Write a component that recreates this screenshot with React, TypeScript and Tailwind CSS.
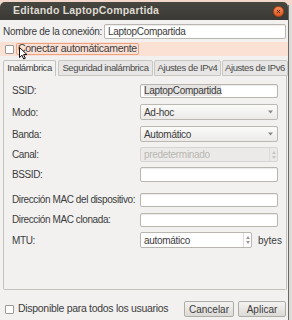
import React from "react";

const font = { fontFamily: '"Liberation Sans", Arial, sans-serif' };

const TextInput = ({
  value,
  selected = false,
  width = "w-[138px]",
  h = "h-[14px]",
}: {
  value?: string;
  selected?: boolean;
  width?: string;
  h?: string;
}) => (
  <div
    className={`${width} ${h} shrink-0 bg-white border border-[#b9b6b0] rounded-[2px] flex items-center px-[3px] text-[10px] tracking-[-0.3px] text-[#3c3c3c] whitespace-nowrap shadow-[inset_0_1px_1px_rgba(0,0,0,0.08)]`}
  >
    {value && <span className={`leading-[11px] ${selected ? "bg-[#e6e5e3]" : ""}`}>{value}</span>}
  </div>
);

const Combo = ({ value }: { value: string }) => (
  <div className="w-[138px] h-[16px] rounded-[2px] border border-[#bcb9b3] bg-gradient-to-b from-[#fbfbfa] to-[#ebeae8] flex items-center justify-between pl-[3px] pr-[4px] text-[10px] tracking-[-0.3px] text-[#3c3c3c] whitespace-nowrap">
    <span>{value}</span>
    <svg width="5" height="4" viewBox="0 0 5 4">
      <path d="M0 0.5h5L2.5 3.5z" fill="#8a8884" />
    </svg>
  </div>
);

const SpinArrows = ({ color }: { color: string }) => (
  <div className="flex flex-col items-center justify-center gap-[2px] w-[8px] h-full border-l border-[#dedcd8]">
    <svg width="4" height="3" viewBox="0 0 4 3">
      <path d="M0 3h4L2 0z" fill={color} />
    </svg>
    <svg width="4" height="3" viewBox="0 0 4 3">
      <path d="M0 0h4L2 3z" fill={color} />
    </svg>
  </div>
);

const Row = ({ label, children, top }: { label: string; children: React.ReactNode; top: string }) => (
  <div className={`flex items-center ${top}`}>
    <span className="w-[128px] shrink-0 text-[10px] tracking-[-0.4px] text-[#3c3c3c] whitespace-nowrap">{label}</span>
    {children}
  </div>
);

const Checkbox = () => (
  <div className="w-[9px] h-[9px] shrink-0 bg-white border border-[#9c9a96] rounded-[1px]" />
);

const tabText = "text-[9.5px] tracking-[-0.4px] whitespace-nowrap";

export default function App() {
  return (
    <div className="w-[292px] h-[320px] overflow-hidden bg-[#f4d7cb] flex flex-col" style={font}>
      <div className="h-[2px]" />
      <div className="flex flex-1">
        {/* Window */}
        <div className="relative w-[288px] flex flex-col">
          {/* Title bar */}
          <div className="h-[18px] rounded-t-[5px] bg-gradient-to-b from-[#47463f] to-[#3a3935] flex items-center justify-between pl-[13px] pr-[4px]">
            <span className="text-[10.5px] font-bold tracking-[0.2px] text-[#dfdbd2] whitespace-nowrap">Editando LaptopCompartida</span>
            <div className="w-[11px] h-[11px] rounded-full bg-gradient-to-b from-[#f58a55] to-[#df5a1c] border border-[#b8461a] flex items-center justify-center">
              <svg width="5" height="5" viewBox="0 0 5 5">
                <path d="M1 1l3 3M4 1l-3 3" stroke="#5a2a10" strokeWidth="1" />
              </svg>
            </div>
          </div>

          {/* Body */}
          <div className="flex-1 bg-[#f2f1f0] flex flex-col">
            {/* Connection name */}
            <div className="flex items-center h-[20px] pl-[3px] pr-[1px] mt-[1px]">
              <span className="w-[101px] shrink-0 text-[10px] tracking-[-0.3px] text-[#3c3c3c] whitespace-nowrap">Nombre de la conexión:</span>
              <TextInput value="LaptopCompartida" width="w-[182px]" h="h-[15px]" />
            </div>

            {/* Autoconnect */}
            <div className="mt-[1px] h-[14px] bg-[#fbe0d4] flex items-center pl-[5px]">
              <Checkbox />
              <div className="ml-[2px] h-[12px] px-[1px] flex items-center rounded-[2px] border border-[#e9a488] text-[10.5px] tracking-[-0.3px] text-[#3c3c3c] whitespace-nowrap">
                Conectar automáticamente
              </div>
            </div>

            {/* Tabs */}
            <div className={`mt-[4px] flex items-end pl-[3px] h-[16px] text-[#4a4a4a] ${tabText}`}>
              <div className="h-[16px] w-[53px] bg-[#f2f1f0] border border-b-0 border-[#c4c2bd] rounded-t-[2px] flex items-center justify-center text-[#3c3c3c]">
                Inalámbrica
              </div>
              <div className="ml-[2px] h-[16px] w-[95px] bg-[#e7e6e4] border border-[#c9c7c2] rounded-t-[2px] flex items-center justify-center">
                Seguridad inalámbrica
              </div>
              <div className="ml-[1px] h-[16px] w-[67px] bg-[#e7e6e4] border border-[#c9c7c2] rounded-t-[2px] flex items-center justify-center">
                Ajustes de IPv4
              </div>
              <div className="ml-[1px] h-[16px] w-[66px] bg-[#e7e6e4] border border-[#c9c7c2] rounded-t-[2px] flex items-center justify-center">
                Ajustes de IPv6
              </div>
            </div>

            {/* Panel */}
            <div className="ml-[3px] mr-[1px] h-[214px] border border-t-0 border-[#c4c2bd] rounded-b-[2px] pl-[8px] flex flex-col">
              <Row label="SSID:" top="mt-[7px]">
                <TextInput value="LaptopCompartida" selected h="h-[14px]" />
              </Row>
              <Row label="Modo:" top="mt-[6px]">
                <Combo value="Ad-hoc" />
              </Row>
              <Row label="Banda:" top="mt-[6px]">
                <Combo value="Automático" />
              </Row>
              <Row label="Canal:" top="mt-[5px]">
                <div className="w-[138px] h-[15px] rounded-[2px] border border-[#d6d4d0] bg-[#ebeae8] flex items-center justify-between pl-[3px] text-[10px] tracking-[-0.3px] text-[#b9b7b3]">
                  <span>predeterminado</span>
                  <SpinArrows color="#c8c6c2" />
                </div>
              </Row>
              <Row label="BSSID:" top="mt-[5px]">
                <TextInput h="h-[15px]" />
              </Row>
              <Row label="Dirección MAC del dispositivo:" top="mt-[10px]">
                <TextInput h="h-[14px]" />
              </Row>
              <Row label="Dirección MAC clonada:" top="mt-[5px]">
                <TextInput h="h-[14px]" />
              </Row>
              <Row label="MTU:" top="mt-[5px]">
                <div className="w-[112px] h-[16px] rounded-[2px] border border-[#b9b6b0] bg-white flex items-center justify-between pl-[3px] text-[10px] tracking-[-0.3px] text-[#3c3c3c]">
                  <span>automático</span>
                  <SpinArrows color="#9a9894" />
                </div>
                <span className="ml-[6px] text-[10px] text-[#3c3c3c]">bytes</span>
              </Row>
            </div>

            {/* Bottom bar */}
            <div className="mt-[11px] flex items-center pl-[5px] pr-[2px]">
              <Checkbox />
              <span className="ml-[4px] text-[10.5px] tracking-[-0.3px] text-[#3c3c3c] whitespace-nowrap">Disponible para todos los usuarios</span>
              <div className="ml-auto flex gap-[4px]">
                <button className="w-[50px] h-[16px] rounded-[2px] border border-[#aeaca7] bg-gradient-to-b from-[#f4f3f2] to-[#dcdad6] text-[10px] text-[#3c3c3c]">
                  Cancelar
                </button>
                <button className="w-[48px] h-[16px] rounded-[2px] border border-[#aeaca7] bg-gradient-to-b from-[#f4f3f2] to-[#dcdad6] text-[10px] text-[#3c3c3c]">
                  Aplicar
                </button>
              </div>
            </div>
          </div>

          {/* Mouse pointer */}
          <svg className="absolute left-[19px] top-[45px]" width="9" height="13" viewBox="0 0 9 13">
            <path d="M0.5 0.5v10l2.5-2.3 1.7 3.8 1.6-0.7-1.7-3.7h3.4z" fill="#fff" stroke="#111" strokeWidth="1" strokeLinejoin="round" />
          </svg>
        </div>

        {/* Background window sliver */}
        <div className="flex-1 mt-[3px] border-l border-[#6b6a66] bg-[#dcdbd8]" />
      </div>
    </div>
  );
}
